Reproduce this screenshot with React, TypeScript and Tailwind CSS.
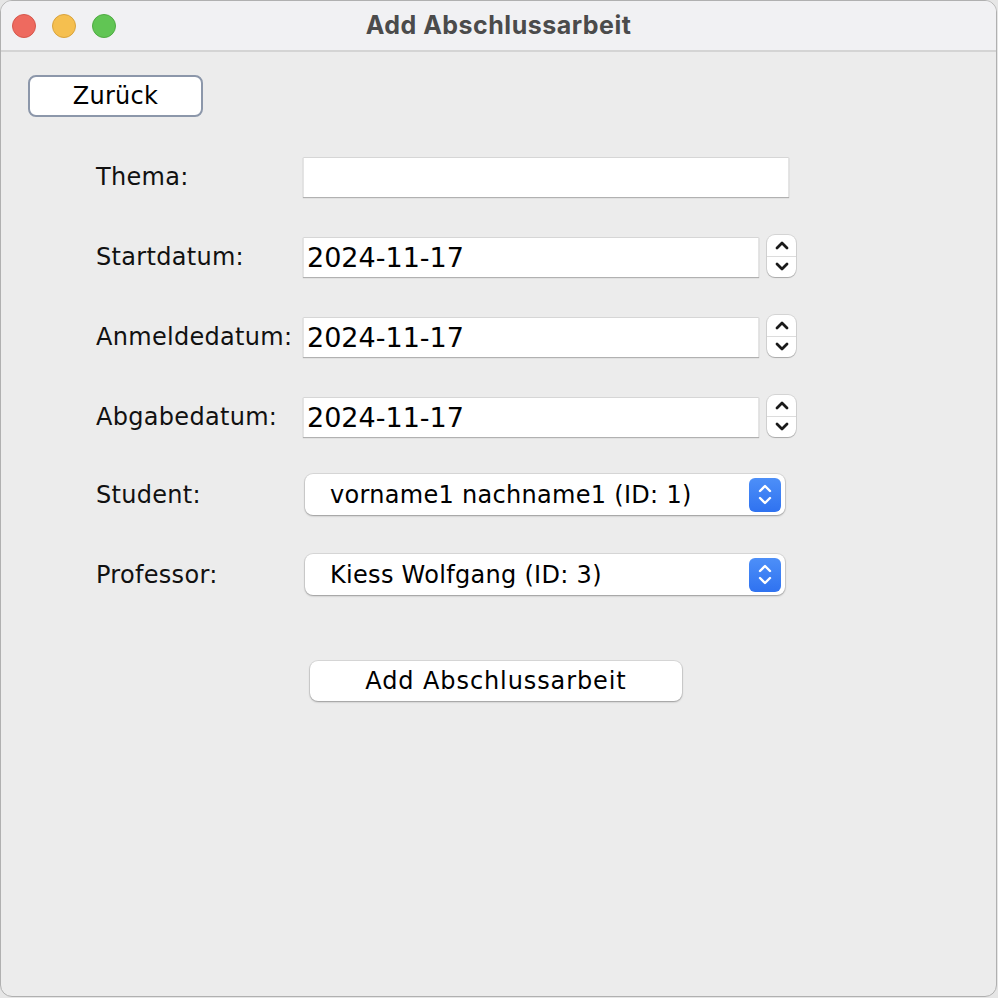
import React from 'react';

const labelFont = { fontFamily: '"DejaVu Sans", "Noto Sans", sans-serif' };

const Field = ({ value }: { value?: string }) => (
  <div className="h-[40px] bg-white border-t border-[#d6d6d6] border-x border-x-[#e4e4e4] shadow-[0_1px_1px_rgba(0,0,0,0.25)] flex items-center pl-[3px] text-[27px] text-black leading-none">
    {value}
  </div>
);

const Spinner = () => (
  <div className="w-[29px] h-[42px] bg-white rounded-[8px] shadow-[0_0_0_1px_rgba(0,0,0,0.1),0_1px_1px_rgba(0,0,0,0.2)] flex flex-col">
    <div className="flex-1 flex items-center justify-center border-b border-[#dcdcdc]">
      <svg width="16" height="10" viewBox="0 0 16 10">
        <path d="M3 8 L8 3 L13 8" fill="none" stroke="#1a1a1a" strokeWidth="2.8" strokeLinecap="round" strokeLinejoin="round" />
      </svg>
    </div>
    <div className="flex-1 flex items-center justify-center">
      <svg width="16" height="10" viewBox="0 0 16 10">
        <path d="M3 2 L8 7 L13 2" fill="none" stroke="#1a1a1a" strokeWidth="2.8" strokeLinecap="round" strokeLinejoin="round" />
      </svg>
    </div>
  </div>
);

const Combo = ({ value }: { value: string }) => (
  <div className="w-[480px] h-[41px] bg-white rounded-[8px] shadow-[0_0_0_1px_rgba(0,0,0,0.08),0_1px_2px_rgba(0,0,0,0.3)] flex items-center justify-between pl-[25px] pr-[4px]">
    <span className="text-[24px] tracking-[0.3px] text-black leading-none">{value}</span>
    <div className="w-[32px] h-[34px] rounded-[6px] bg-gradient-to-b from-[#4d8ff8] to-[#2f72f0] flex flex-col items-center justify-center gap-[3px]">
      <svg width="16" height="10" viewBox="0 0 16 10">
        <path d="M3 8 L8 3 L13 8" fill="none" stroke="#ffffff" strokeWidth="2.4" strokeLinecap="round" strokeLinejoin="round" />
      </svg>
      <svg width="16" height="10" viewBox="0 0 16 10">
        <path d="M3 2 L8 7 L13 2" fill="none" stroke="#ffffff" strokeWidth="2.4" strokeLinecap="round" strokeLinejoin="round" />
      </svg>
    </div>
  </div>
);

const Label = ({ children }: { children: string }) => (
  <div className="w-[207px] shrink-0 text-[24px] tracking-[0.3px] text-[#111] leading-none">{children}</div>
);

const App = () => {
  const dates = [
    { label: 'Startdatum:', value: '2024-11-17' },
    { label: 'Anmeldedatum:', value: '2024-11-17' },
    { label: 'Abgabedatum:', value: '2024-11-17' },
  ];

  return (
    <div className="w-[998px] h-[998px] bg-[#e6e6e6]" style={labelFont}>
      <div className="w-[997px] h-[997px] bg-[#ececec] rounded-[12px] border border-[#b0b0b0] overflow-hidden flex flex-col">
        {/* Titelleiste */}
        <div className="h-[51px] shrink-0 bg-[#f1f1f3] border-b-2 border-[#d4d4d4] flex items-center relative">
          <div className="flex gap-[16px] pl-[11px]">
            <div className="w-[24px] h-[24px] rounded-full bg-[#ee6a5f] border border-[#d6574c]" />
            <div className="w-[24px] h-[24px] rounded-full bg-[#f5bf4f] border border-[#d9a33c]" />
            <div className="w-[24px] h-[24px] rounded-full bg-[#61c554] border border-[#4fab42]" />
          </div>
          <div className="absolute inset-0 flex items-center justify-center">
            <span className="text-[25px] font-bold tracking-[0.5px] text-[#4b4b4b]" style={{ fontFamily: 'Inter, "Liberation Sans", sans-serif' }}>
              Add Abschlussarbeit
            </span>
          </div>
        </div>

        {/* Inhalt */}
        <div className="flex flex-col pt-[23px]">
          <div className="pl-[27px]">
            <button className="w-[175px] h-[42px] bg-white rounded-[8px] border-2 border-[#8c97aa] text-[24px] tracking-[0.3px] text-black leading-none flex items-center justify-center">
              Zurück
            </button>
          </div>

          <div className="flex flex-col pl-[95px] mt-[40px]">
            <div className="flex items-center h-[40px]">
              <Label>Thema:</Label>
              <div className="w-[486px]">
                <Field />
              </div>
            </div>

            {dates.map((d) => (
              <div key={d.label} className="flex items-center h-[40px] mt-[40px]">
                <Label>{d.label}</Label>
                <div className="w-[456px]">
                  <Field value={d.value} />
                </div>
                <div className="ml-[8px] -mt-[2px]">
                  <Spinner />
                </div>
              </div>
            ))}

            <div className="flex items-center h-[41px] mt-[37px]">
              <Label>Student:</Label>
              <div className="ml-[2px]">
                <Combo value="vorname1 nachname1 (ID: 1)" />
              </div>
            </div>

            <div className="flex items-center h-[41px] mt-[39px]">
              <Label>Professor:</Label>
              <div className="ml-[2px]">
                <Combo value="Kiess Wolfgang (ID: 3)" />
              </div>
            </div>

            <div className="pl-[214px] mt-[66px]">
              <button className="w-[372px] h-[40px] bg-white rounded-[8px] shadow-[0_0_0_1px_rgba(0,0,0,0.08),0_1px_2px_rgba(0,0,0,0.3)] text-[24px] tracking-[0.9px] text-black leading-none flex items-center justify-center">
                Add Abschlussarbeit
              </button>
            </div>
          </div>
        </div>
      </div>
    </div>
  );
};

export default App;
